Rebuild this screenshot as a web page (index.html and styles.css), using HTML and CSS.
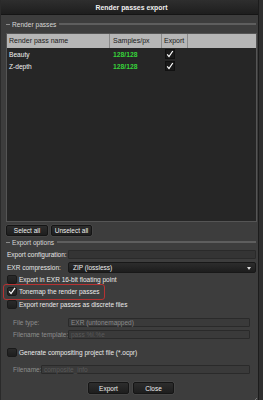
FILE: index.html
```html
<!DOCTYPE html>
<html>
<head>
<meta charset="utf-8">
<link rel="stylesheet" href="styles.css">
</head>
<body>
<div class="screen">
  <div class="window">
    <div class="titlebar">Render passes export</div>
    <div class="content">
      <div class="group-label"><span class="dash"></span><span class="gl-text">Render passes</span><span class="gl-line"></span></div>
      <div class="table">
        <div class="thead">
          <div class="th c1">Render pass name</div>
          <div class="th c2">Samples/px</div>
          <div class="th c3">Export</div>
          <div class="th c4"></div>
        </div>
        <div class="tbody">
          <div class="tr">
            <div class="td c1">Beauty</div>
            <div class="td c2 green">128/128</div>
            <div class="td c3"><span class="tcheck"><svg viewBox="0 0 8 8" width="8" height="8"><path d="M1.2 4.4 L3 6.6 L6.8 1" fill="none" stroke="#fff" stroke-width="1.2"/></svg></span></div>
          </div>
          <div class="tr">
            <div class="td c1">Z-depth</div>
            <div class="td c2 green">128/128</div>
            <div class="td c3"><span class="tcheck"><svg viewBox="0 0 8 8" width="8" height="8"><path d="M1.2 4.4 L3 6.6 L6.8 1" fill="none" stroke="#fff" stroke-width="1.2"/></svg></span></div>
          </div>
        </div>
      </div>
      <div class="btnrow">
        <button class="btn b-sel">Select all</button>
        <button class="btn b-unsel">Unselect all</button>
      </div>
      <div class="group-label g2"><span class="dash"></span><span class="gl-text">Export options</span><span class="gl-line"></span></div>
      <div class="field f-conf">
        <span class="label">Export configuration:</span>
        <span class="input"></span>
      </div>
      <div class="field f-comp">
        <span class="label">EXR compression:</span>
        <span class="select"><span class="sel-text">ZIP (lossless)</span><span class="arrow"></span></span>
      </div>
      <div class="check c-first"><span class="box"></span><span class="ctext">Export in EXR 16-bit floating point</span></div>
      <div class="check c-tone">
        <span class="box checked"><svg viewBox="0 0 10 10" width="10" height="10"><path d="M1.5 5.5 L3.8 8.2 L8.8 1" fill="none" stroke="#fff" stroke-width="1.5"/></svg></span><span class="ctext">Tonemap the render passes</span>
        <span class="highlight"></span>
      </div>
      <div class="check"><span class="box"></span><span class="ctext">Export render passes as discrete files</span></div>
      <div class="field dis f-type">
        <span class="label">File type:</span>
        <span class="input wide"><span class="itext">EXR (untonemapped)</span></span>
      </div>
      <div class="field dis f-tmpl">
        <span class="label">Filename template:</span>
        <span class="input wide"><span class="itext faint">pass %l.%e</span></span>
      </div>
      <div class="check c-gen"><span class="box"></span><span class="ctext">Generate compositing project file (*.ocpr)</span></div>
      <div class="field dis f-name">
        <span class="label short">Filename:</span>
        <span class="input name"><span class="itext faint">composite_info</span></span>
      </div>
      <div class="btnrow bottom">
        <button class="btn b-exp">Export</button>
        <button class="btn b-close">Close</button>
      </div>
    </div>
    <span class="grip"><svg viewBox="0 0 8 8" width="8" height="8"><path d="M8 1 L1 8 M8 4 L4 8 M8 7 L7 8" stroke="#8a8a8a" stroke-width="0.8"/></svg></span>
  </div>
  <div class="edge"></div>
</div>
</body>
</html>
```

FILE: styles.css
```css
html, body {
  margin: 0;
  padding: 0;
  background: #2b2b2b;
}
body {
  font-family: "Liberation Sans", Arial, sans-serif;
  color: #e8e8e8;
  white-space: nowrap;
}
.screen {
  display: flex;
  width: 263px;
  height: 400px;
  overflow: hidden;
}
.window {
  position: relative;
  width: 258px;
  height: 400px;
  background: #3d3d3d;
  border-left: 1px solid #2a2a2a;
  box-sizing: border-box;
  display: flex;
  flex-direction: column;
}
.edge {
  flex: 1;
  background: #2f2f2f;
  border-left: 1px solid #1c1c1c;
}
.titlebar {
  height: 15px;
  background: linear-gradient(#2e2e2e, #1e1e1e);
  border-bottom: 1px solid #151515;
  box-sizing: border-box;
  text-align: center;
  font-size: 6.9px;
  font-weight: bold;
  line-height: 15px;
  color: #f0f0f0;
  padding-left: 4px;
}
.content {
  display: flex;
  flex-direction: column;
  padding: 0 0 0 5px;
}
.group-label {
  display: flex;
  align-items: center;
  height: 12px;
  margin-top: 3px;
  font-size: 6.6px;
  color: #d8d8d8;
}
.group-label .dash {
  width: 4px;
  height: 1px;
  background: #8a8a8a;
  margin: 0 2px 0 0;
}
.group-label .gl-line {
  flex: 1;
  height: 2px;
  background: #5e5e5e;
  margin: 0 2px 0 3px;
}
.table {
  margin-top: 3px;
  width: 251px;
  border: 1px solid #555;
  box-sizing: border-box;
  height: 189px;
  display: flex;
  flex-direction: column;
  background: #262626;
}
.thead {
  display: flex;
  height: 14px;
  background: #b6b6b6;
  color: #1a1a1a;
  font-size: 7px;
}
.th {
  line-height: 14px;
  padding-left: 2px;
  box-sizing: border-box;
  border-right: 1px solid #8a8a8a;
}
.th.c4 { border-right: none; flex: 1; }
.c1 { width: 103px; }
.c2 { width: 52px; }
.c3 { width: 26px; }
.th.c2, .td.c2 { padding-left: 3px; }
.tbody {
  flex: 1;
  padding-top: 0;
}
.tr {
  display: flex;
  height: 12px;
  align-items: center;
  font-size: 6.6px;
  color: #f2f2f2;
}
.td {
  padding-left: 2px;
  box-sizing: border-box;
}
.green {
  color: #36d23a;
  font-weight: bold;
  font-size: 6.8px;
}
.tcheck {
  display: inline-flex;
  width: 8px;
  height: 8px;
  margin-left: 1px;
  background: #1a1a1a;
  border: 1px solid #111;
  align-items: center;
  justify-content: center;
  vertical-align: middle;
}
.btnrow {
  display: flex;
  gap: 3px;
  margin-top: 3px;
}
.btn {
  height: 11px;
  width: 42px;
  padding: 0;
  font-family: inherit;
  font-size: 6.5px;
  color: #f0f0f0;
  background: linear-gradient(#2d2d2d, #1e1e1e);
  border: 1px solid #151515;
  border-radius: 2px;
  box-shadow: 0 0 0 0.5px #4e4e4e;
  line-height: 9px;
}
.b-unsel { width: 41px; }
.g2 { margin-top: 0; }
.field {
  display: flex;
  align-items: center;
  height: 12px;
  font-size: 6.5px;
  color: #e6e6e6;
}
.f-comp { margin-top: 1px; }
.field .label {
  width: 62px;
  padding-left: 1px;
  box-sizing: border-box;
}
.input {
  width: 188px;
  height: 9px;
  background: #343434;
  border: 1px solid #2a2a2a;
  box-sizing: border-box;
  border-radius: 1px;
  display: flex;
  align-items: center;
}
.input.wide { width: 182px; }
.input.name { width: 209px; }
.select {
  width: 188px;
  height: 11px;
  background: linear-gradient(#2c2c2c, #1d1d1d);
  border: 1px solid #181818;
  box-sizing: border-box;
  border-radius: 2px;
  display: flex;
  align-items: center;
  justify-content: space-between;
  padding: 0 4px 0 4px;
  color: #f0f0f0;
}
.arrow {
  width: 0;
  height: 0;
  border-left: 2px solid transparent;
  border-right: 2px solid transparent;
  border-top: 3px solid #ddd;
  margin-top: 2px;
}
.check {
  position: relative;
  display: flex;
  align-items: center;
  height: 12.5px;
  font-size: 6.5px;
  color: #ececec;
  padding-left: 1px;
}
.box {
  width: 10px;
  height: 9px;
  box-sizing: border-box;
  border: 1px solid #1a1a1a;
  border-radius: 2px;
  background: linear-gradient(#2a2a2a, #1e1e1e);
  margin-right: 2px;
  display: flex;
  align-items: center;
  justify-content: center;
}
.box.checked { background: linear-gradient(#2c2c2c, #222); }
.box svg { margin-top: -2px; }
.highlight {
  position: absolute;
  left: -3px;
  top: -1.5px;
  width: 102px;
  height: 16px;
  border: 1px solid #b73232;
  border-radius: 3px;
  box-sizing: border-box;
}
.dis { color: #8e8e8e; }
.dis .label { padding-left: 7px; }
.dis .label.short { width: 35px; }
.f-type { margin-top: 5.5px; }
.dis .input {
  background: #3a3a3a;
  border-color: #2a2a2a;
}
.itext {
  padding-left: 2px;
  color: #8a8a8a;
}
.itext.faint { color: #595959; }
.c-gen { margin-top: 6px; }
.f-name { margin-top: 5px; }
.bottom {
  justify-content: center;
  margin-top: 6.5px;
  gap: 4px;
  padding-right: 2px;
}
.bottom .btn { width: 41px; height: 12px; }
.grip {
  position: absolute;
  right: 1px;
  bottom: 1px;
  width: 8px;
  height: 8px;
}
```
